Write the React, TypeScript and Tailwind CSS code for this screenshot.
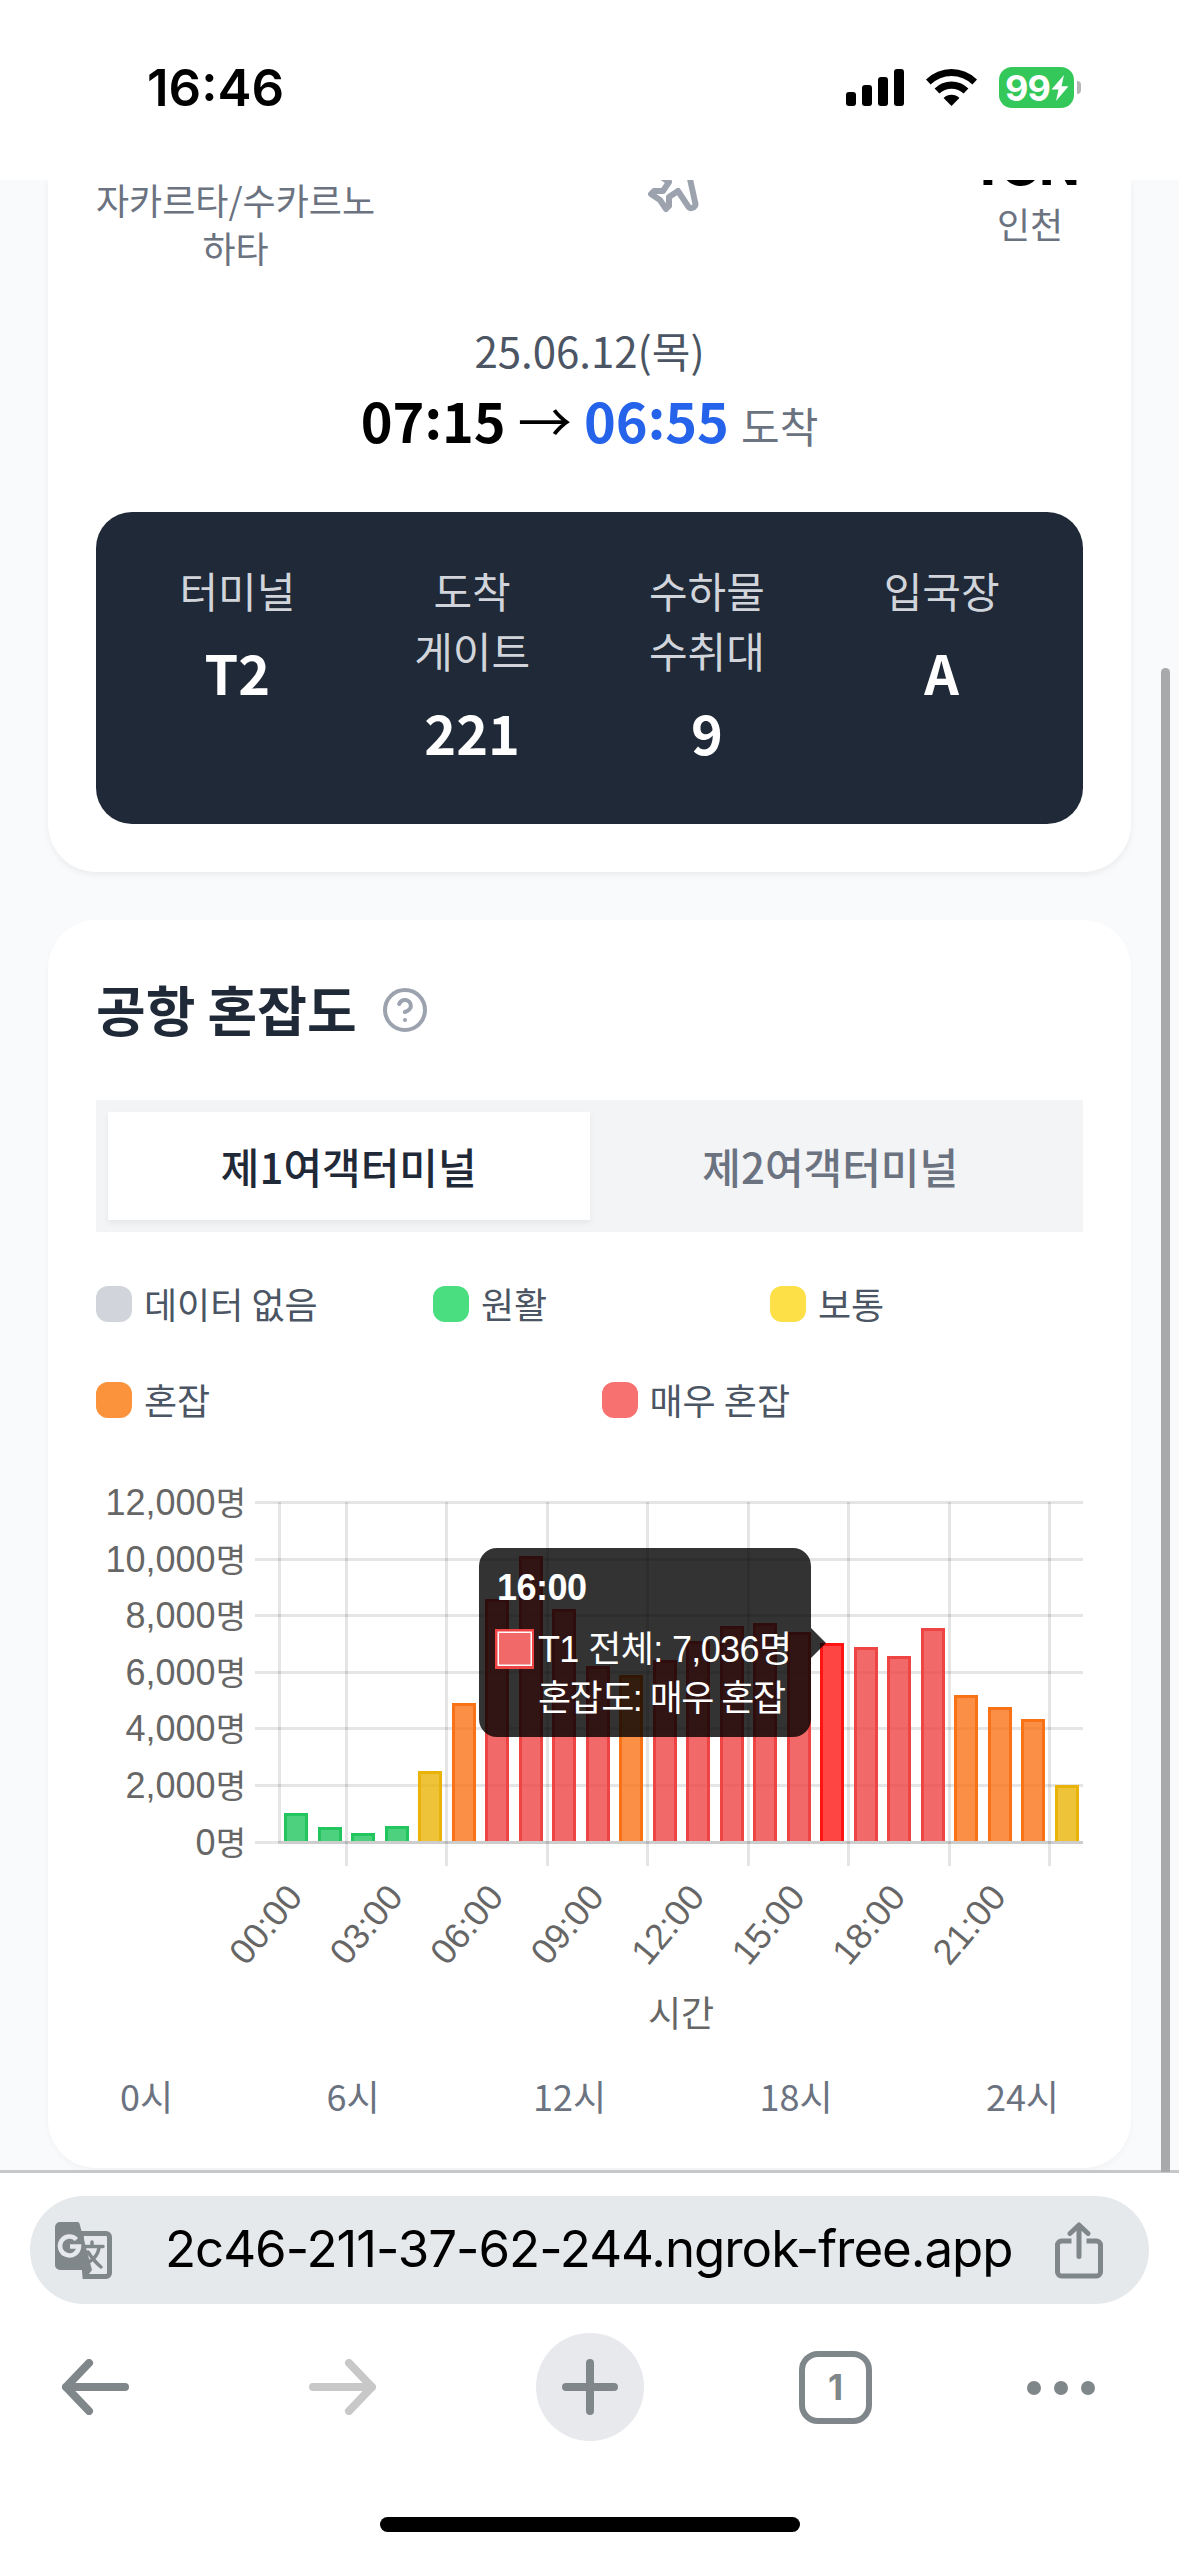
import { CircleHelp, Plane } from 'lucide-react';

const LEVELS = {
  smooth: { fill: 'rgba(34,197,94,0.8)', border: '#22c55e' },
  normal: { fill: 'rgba(234,179,8,0.8)', border: '#eab308' },
  busy: { fill: 'rgba(249,115,22,0.8)', border: '#f97316' },
  veryBusy: { fill: 'rgba(239,68,68,0.8)', border: '#ef4444' },
};

type Level = keyof typeof LEVELS;

const HOURLY: { count: number; level: Level }[] = [
  { count: 1034, level: 'smooth' },
  { count: 540, level: 'smooth' },
  { count: 330, level: 'smooth' },
  { count: 575, level: 'smooth' },
  { count: 2515, level: 'normal' },
  { count: 4915, level: 'busy' },
  { count: 8590, level: 'veryBusy' },
  { count: 10105, level: 'veryBusy' },
  { count: 8225, level: 'veryBusy' },
  { count: 6225, level: 'veryBusy' },
  { count: 5905, level: 'busy' },
  { count: 6435, level: 'veryBusy' },
  { count: 7105, level: 'veryBusy' },
  { count: 7635, level: 'veryBusy' },
  { count: 7740, level: 'veryBusy' },
  { count: 7425, level: 'veryBusy' },
  { count: 7036, level: 'veryBusy' },
  { count: 6895, level: 'veryBusy' },
  { count: 6575, level: 'veryBusy' },
  { count: 7565, level: 'veryBusy' },
  { count: 5200, level: 'busy' },
  { count: 4775, level: 'busy' },
  { count: 4350, level: 'busy' },
  { count: 2030, level: 'normal' },
];

const ACTIVE_HOUR = 16;

const Y_TICKS = [
  { label: '12,000', y: 22.5 },
  { label: '10,000', y: 79.5 },
  { label: '8,000', y: 135.5 },
  { label: '6,000', y: 192.5 },
  { label: '4,000', y: 248.5 },
  { label: '2,000', y: 305.5 },
  { label: '0', y: 362.5 },
];

const X_LINES = [250.5, 350.5, 451.5, 551.5, 652.5, 752.5, 853.5, 953.5];
const X_LABELS = ['00:00', '03:00', '06:00', '09:00', '12:00', '15:00', '18:00', '21:00'];

const FLIGHT_INFO = [
  { label: ['터미널'], value: 'T2' },
  { label: ['도착', '게이트'], value: '221' },
  { label: ['수하물', '수취대'], value: '9' },
  { label: ['입국장'], value: 'A' },
];

const StatusBar = () => (
  <header className="flex h-[180px] shrink-0 items-start justify-between bg-white pr-[98px] pl-[147px] font-['Inter',sans-serif]">
    <span className="mt-[57px] text-[51px] leading-[61px] font-semibold">16:46</span>
    <div className="mt-[67px] flex items-center">
      <svg width="58" height="37" viewBox="0 0 58 37">
        <rect x="0" y="23" width="10" height="14" rx="3" />
        <rect x="16" y="16" width="10" height="21" rx="3" />
        <rect x="32" y="8" width="10" height="29" rx="3" />
        <rect x="48" y="0" width="10" height="37" rx="3" />
      </svg>
      <svg className="ml-[22px]" width="51" height="37" viewBox="0 0 51 37">
        <path d="M0 10.5a36.5 36.5 0 0 1 51 0l-4.6 5a29.8 29.8 0 0 0-41.8 0z" />
        <path d="M8.6 19.5a24 24 0 0 1 33.8 0l-4.8 5.1a17.3 17.3 0 0 0-24.2 0z" />
        <path d="M17.6 29a11.5 11.5 0 0 1 15.8 0L25.5 37z" />
      </svg>
      <div className="ml-[22px] flex h-[41px] w-[75px] items-center rounded-[13px] bg-[#34c759] pl-[6px] text-white">
        <span className="text-[36px] leading-none font-bold tracking-[-1px]">99</span>
        <svg className="ml-px" width="18" height="26" viewBox="0 0 18 26" fill="currentColor">
          <path d="M13 0 0.5 14.5h7L5 26 17.5 11.3h-7z" />
        </svg>
      </div>
      <div className="ml-[3px] h-[13px] w-[4px] rounded-r-full bg-[#b5b5b5]" />
    </div>
  </header>
);

// The colon sits a little above the baseline between the digits
const Time = ({ value, className }: { value: string; className?: string }) => {
  const [hour, minute] = value.split(':');
  return (
    <b className={className}>
      {hour}
      <span className="relative top-[-4px]">:</span>
      {minute}
    </b>
  );
};

const FlightCard = () => (
  <section className="mx-[48px] h-[692px] shrink-0 overflow-hidden rounded-b-[48px] bg-white px-[48px] shadow-[0_3px_6px_rgba(0,0,0,0.06)]">
    <div className="flex h-[140px] items-start justify-between text-center text-[36px] leading-[48px] whitespace-nowrap text-[#6b7280]">
      <div className="mt-[-5px] flex w-[279px] flex-col items-center">
        <p>자카르타/수카르노</p>
        <p>하타</p>
      </div>
      <Plane className="mt-[-34px] mr-[-2px] ml-[2px] h-[72px] w-[72px] text-[#9ca3af]" strokeWidth={2} />
      <div className="mt-[-63px] w-[106px]">
        <p className="h-[82px] text-[60px] leading-[84px] font-bold text-black">ICN</p>
        <p>인천</p>
      </div>
    </div>
    <p className="text-center text-[42px] leading-[60px] text-[#4b5563]">25.06.12(목)</p>
    <p className="h-[84px] text-center text-[54px] leading-[80px] text-black">
      <Time value="07:15" /> → <Time value="06:55" className="text-[#2563eb]" />{' '}
      <span className="text-[42px] leading-none text-[#6b7280]">도착</span>
    </p>
    <dl className="mt-[48px] grid h-[312px] grid-cols-4 rounded-[36px] bg-[#1f2937] px-[24px] pt-[48px] text-center">
      {FLIGHT_INFO.map(({ label, value }) => (
        <div key={value}>
          <dt className="text-[42px] leading-[60px] text-[#d1d5db]">
            {label.map(line => (
              <span key={line} className="block">
                {line}
              </span>
            ))}
          </dt>
          <dd className="mt-[10px] text-[54px] leading-[84px] font-bold text-white">{value}</dd>
        </div>
      ))}
    </dl>
  </section>
);

const LegendItem = ({ color, label }: { color: string; label: string }) => (
  <li className="flex items-center gap-[12px]">
    <span className={`h-[36px] w-[36px] rounded-[12px] ${color}`} />
    <span className="pb-[2px] leading-[46px]">{label}</span>
  </li>
);

const CongestionChart = () => (
  <svg
    className="block font-['Liberation_Sans','Noto_Sans_CJK_KR',sans-serif]"
    width="987"
    height="600"
    viewBox="0 0 987 600"
    fontSize="36"
    fill="#666"
  >
    <g stroke="rgba(0,0,0,0.1)" strokeWidth="3">
      {Y_TICKS.map(({ y }) => (
        <line key={y} x1="159" x2="987" y1={y} y2={y} />
      ))}
      <line x1="183.5" x2="183.5" y1="22" y2="362" />
      {X_LINES.map(x => (
        <line key={x} x1={x} x2={x} y1="22" y2="386" />
      ))}
      <line x1="182" x2="987" y1="362.5" y2="362.5" />
    </g>

    {HOURLY.map(({ count, level }, hour) => {
      const x = Math.round(188 + hour * 33.5);
      const top = Math.round(362.3 - (count * 340) / 12000);
      const active = hour === ACTIVE_HOUR;
      return (
        <g key={hour}>
          <rect x={x} y={top} width="24" height={361 - top} fill={active ? '#ff4444' : LEVELS[level].fill} />
          <path
            d={`M${x + 1.5} 361V${top + 1.5}H${x + 22.5}V361`}
            fill="none"
            stroke={active ? '#ff1414' : LEVELS[level].border}
            strokeWidth="3"
          />
        </g>
      );
    })}

    {Y_TICKS.map(({ label, y }) => (
      <text key={label} x="150" y={y + 12.5} textAnchor="end">
        {label}
        <tspan fontSize="33">명</tspan>
      </text>
    ))}
    {X_LABELS.map((label, i) => (
      <text key={label} textAnchor="end" transform={`translate(${208 + i * 100.5} 418) rotate(-50)`}>
        {label}
      </text>
    ))}
    <text x="585" y="547" textAnchor="middle">
      시간
    </text>

    <path
      d="M401 68h296a18 18 0 0 1 18 18v62l15 15-15 15v61a18 18 0 0 1-18 18H401a18 18 0 0 1-18-18V86a18 18 0 0 1 18-18z"
      fill="rgba(0,0,0,0.8)"
    />
    <rect x="399" y="149" width="39" height="40" fill="#ef4444" />
    <rect x="401.5" y="151.5" width="34.5" height="34.5" fill="#fff" />
    <rect x="403" y="153" width="31.5" height="31.5" fill="#f26969" />
    <g fill="#fff">
      <text x="401" y="120" fontWeight="700" textLength="90">
        16:00
      </text>
      <text x="442" y="182" textLength="254">
        T1 전체: 7,036명
      </text>
      <text x="442" y="231" textLength="248">
        혼잡도: 매우 혼잡
      </text>
    </g>
  </svg>
);

const CongestionCard = () => (
  <section className="mx-[48px] mt-[48px] h-[1248px] shrink-0 rounded-[48px] bg-white px-[48px] shadow-[0_3px_6px_rgba(0,0,0,0.03)]">
    <div className="flex items-center gap-[24px] pt-[48px]">
      <h2 className="pb-[3px] text-[54px] leading-[81px] font-bold text-[#1f2937]">공항 혼잡도</h2>
      <CircleHelp className="h-[48px] w-[48px] text-[#9ca3af]" strokeWidth={2} />
    </div>
    <div className="mt-[48px] flex h-[132px] bg-[#f3f4f6] p-[12px] text-[42px] leading-[60px] font-medium">
      <button className="flex-1 bg-white text-[#1f2937] shadow-[0_3px_6px_rgba(0,0,0,0.06)]">제1여객터미널</button>
      <button className="flex-1 text-[#6b7280]">제2여객터미널</button>
    </div>
    <div className="mt-[48px] text-[36px] leading-[48px] text-[#4b5563]">
      <ul className="grid grid-cols-3 gap-[24px]">
        <LegendItem color="bg-[#d1d5db]" label="데이터 없음" />
        <LegendItem color="bg-[#4ade80]" label="원활" />
        <LegendItem color="bg-[#fde047]" label="보통" />
      </ul>
      <ul className="mt-[48px] grid grid-cols-2 gap-[24px]">
        <LegendItem color="bg-[#fb923c]" label="혼잡" />
        <LegendItem color="bg-[#f87171]" label="매우 혼잡" />
      </ul>
    </div>
    <div className="mt-[56px]">
      <CongestionChart />
    </div>
    <div className="mt-[-9px] flex justify-between px-[24px] text-[36px] leading-[48px] text-[#6b7280]">
      <span>0시</span>
      <span>6시</span>
      <span>12시</span>
      <span>18시</span>
      <span>24시</span>
    </div>
  </section>
);

const BrowserBar = () => (
  <footer className="flex h-[386px] shrink-0 flex-col border-t-[3px] border-[#c6c7c9] bg-white text-[#80878a]">
    <div className="mx-[30px] mt-[23px] flex h-[108px] shrink-0 items-center rounded-full bg-[#e6e9ec] pr-[46px] pl-[25px]">
      <svg width="57" height="57" viewBox="0 0 57 57">
        <path d="M26 11.500h25a3.500 3.500 0 0 1 3.500 3.500v36a3.500 3.500 0 0 1-3.500 3.500H30z" fill="none" stroke="currentColor" strokeWidth="5" />
        <path d="M5 0h17.500a2 2 0 0 1 2 1.500L37 48l-7 9-3-9H5a5 5 0 0 1-5-5V5a5 5 0 0 1 5-5z" fill="currentColor" />
        <path
          d="M29 24.500h19M37 20v4M44 26c-1 6-5 11-10 14M33 30c4 6 8 11 13 15"
          fill="none"
          stroke="currentColor"
          strokeWidth="3.500"
          strokeLinecap="round"
        />
        <path d="M21.500 17.500a9.500 9.500 0 1 0 2.500 7H15" fill="none" stroke="#e6e9ec" strokeWidth="4.500" />
      </svg>
      <span className="ml-[53px] flex-1 pb-[2px] font-['Inter',sans-serif] text-[51px] leading-[60px] tracking-[-1.03px] whitespace-nowrap text-black">
        2c46-211-37-62-244.ngrok-free.app
      </span>
      <svg
        width="48"
        height="57"
        viewBox="0 0 48 57"
        fill="none"
        stroke="currentColor"
        strokeWidth="5"
        strokeLinecap="round"
        strokeLinejoin="round"
      >
        <path d="M24 34.500V4M15 11.500l9-8.500 9 8.500" />
        <path d="M16.500 19H6.500a4 4 0 0 0-4 4V50a4 4 0 0 0 4 4h35a4 4 0 0 0 4-4V23a4 4 0 0 0-4-4H31.500" strokeLinecap="butt" />
      </svg>
    </div>
    <div className="mt-[29px] flex h-[108px] shrink-0 items-center pl-[61px]">
      <svg width="68" height="56" viewBox="0 0 68 56" fill="none" stroke="currentColor" strokeWidth="8" strokeLinecap="round" strokeLinejoin="round">
        <path d="M64 28H5M28 4 5 28l23 24" />
      </svg>
      <svg className="ml-[180px]" width="68" height="56" viewBox="0 0 68 56" fill="none" stroke="#c8c8c8" strokeWidth="8" strokeLinecap="round" strokeLinejoin="round">
        <path d="M4 28h59M40 4l23 24-23 24" />
      </svg>
      <div className="ml-[159px] flex h-[108px] w-[108px] items-center justify-center rounded-full bg-[#e8e9ed]">
        <svg width="56" height="56" viewBox="0 0 56 56" stroke="currentColor" strokeWidth="8" strokeLinecap="round">
          <path d="M28 4v48M4 28h48" />
        </svg>
      </div>
      <div className="ml-[155px] flex h-[73px] w-[73px] items-center justify-center rounded-[19px] border-[6px] border-current font-['Inter',sans-serif] text-[35px] leading-none font-bold">
        1
      </div>
      <svg className="mt-[2px] ml-[155px]" width="68" height="14" viewBox="0 0 68 14" fill="currentColor">
        <circle cx="7" cy="7" r="7" />
        <circle cx="34" cy="7" r="7" />
        <circle cx="61" cy="7" r="7" />
      </svg>
    </div>
    <div className="mt-[76px] h-[15px] w-[420px] shrink-0 self-center rounded-full bg-black" />
  </footer>
);

export default function App() {
  return (
    <div className="relative flex h-[2556px] w-[1179px] flex-col overflow-hidden bg-[#f9fafb] font-['Noto_Sans_CJK_KR',sans-serif]">
      <StatusBar />
      <main className="flex h-[1990px] shrink-0 flex-col overflow-hidden">
        <FlightCard />
        <CongestionCard />
      </main>
      <BrowserBar />
      <div className="absolute top-[668px] right-[9px] h-[1504px] w-[9px] rounded-t-full bg-[#a8a9ab]" />
    </div>
  );
}
